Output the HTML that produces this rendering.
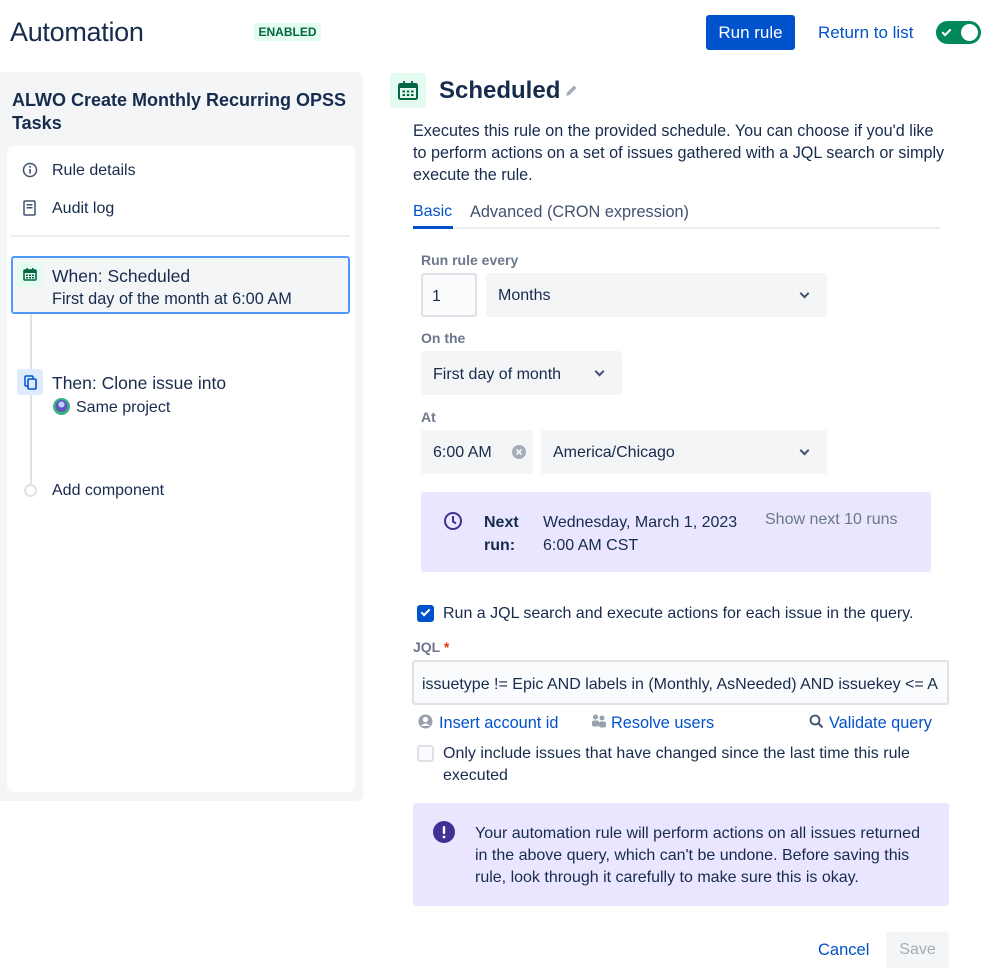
<!DOCTYPE html>
<html><head><meta charset="utf-8"><style>
*{box-sizing:border-box;margin:0;padding:0}
body{width:999px;height:977px;background:#fff;font-family:"Liberation Sans",sans-serif;color:#172b4d;font-size:16px;position:relative;overflow:hidden}
.a{position:absolute;white-space:nowrap}
.lbl{font-size:14px;font-weight:bold;color:#6b778c}
.sel{position:absolute;background:#f4f5f7;border-radius:3px}
.chev{position:absolute;width:7px;height:7px;border-right:2px solid #42526e;border-bottom:2px solid #42526e;transform:rotate(45deg)}
.blue{color:#0052cc}
</style></head><body>
<div class="a" style="left:10px;top:17px;font-size:27px;letter-spacing:-0.3px">Automation</div>
<div class="a" style="left:254px;top:23px;width:67px;height:18px;background:#e3fcef;border-radius:3px;color:#006644;font-size:12px;font-weight:bold;text-align:center;line-height:18px">ENABLED</div>
<div class="a" style="left:706px;top:15px;width:89px;height:35px;background:#0052cc;border-radius:3px;color:#fff;text-align:center;line-height:35px;font-size:17px">Run rule</div>
<div class="a blue" style="left:818px;top:23px;font-size:17px">Return to list</div>
<div class="a" style="left:936px;top:21px;width:45px;height:23px;background:#00875a;border-radius:12px"><div style="position:absolute;right:3px;top:3px;width:17px;height:17px;border-radius:50%;background:#fff"></div><div style="position:absolute;left:8px;top:6px;width:5px;height:9px;border-right:2px solid #fff;border-bottom:2px solid #fff;transform:rotate(45deg)"></div></div>

<div class="a" style="left:0;top:72px;width:363px;height:729px;background:#f4f5f7;border-radius:0 6px 6px 0"></div>
<div class="a" style="left:12px;top:89px;font-size:18px;font-weight:bold;line-height:23px;white-space:normal;width:340px">ALWO Create Monthly Recurring OPSS Tasks</div>
<div class="a" style="left:7px;top:146px;width:348px;height:646px;background:#fff;border-radius:6px"></div>
<svg class="a" style="left:22px;top:162px" width="16" height="16"><circle cx="8" cy="8" r="6.5" fill="none" stroke="#42526e" stroke-width="1.5"/><rect x="7.2" y="7" width="1.6" height="4.5" fill="#42526e"/><circle cx="8" cy="4.8" r="1" fill="#42526e"/></svg>
<div class="a" style="left:52px;top:162px">Rule details</div>
<svg class="a" style="left:23px;top:200px" width="14" height="16"><rect x="1" y="1" width="11" height="14" rx="1" fill="none" stroke="#42526e" stroke-width="1.5"/><rect x="3.5" y="4" width="6" height="1.5" fill="#42526e"/><rect x="3.5" y="7" width="6" height="1.5" fill="#42526e"/></svg>
<div class="a" style="left:52px;top:200px">Audit log</div>
<div class="a" style="left:11px;top:235px;width:339px;height:2px;background:#ebecf0"></div>
<div class="a" style="left:30px;top:287px;width:2px;height:200px;background:#dfe1e6"></div>
<div class="a" style="left:11px;top:256px;width:339px;height:58px;border:2px solid #4c9aff;background:#f4f5f7;border-radius:3px"></div>
<div class="a" style="left:17px;top:262px;width:26px;height:25px;background:#e3fcef;border-radius:3px"></div>
<svg class="a" style="left:23px;top:268px" width="14" height="13"><rect x="1" y="2" width="12" height="10" rx="1" fill="none" stroke="#006644" stroke-width="1.6"/><rect x="1" y="2" width="12" height="3" fill="#006644"/><rect x="3.5" y="0" width="1.5" height="3" fill="#006644"/><rect x="9" y="0" width="1.5" height="3" fill="#006644"/><g fill="#006644"><rect x="3" y="6.5" width="2" height="1.5"/><rect x="6" y="6.5" width="2" height="1.5"/><rect x="9" y="6.5" width="2" height="1.5"/><rect x="3" y="9" width="2" height="1.5"/><rect x="6" y="9" width="2" height="1.5"/><rect x="9" y="9" width="2" height="1.5"/></g></svg>
<div class="a" style="left:52px;top:266px;font-size:17.5px">When: Scheduled</div>
<div class="a" style="left:52px;top:290px;font-size:16.3px">First day of the month at 6:00 AM</div>
<div class="a" style="left:17px;top:369px;width:26px;height:26px;background:#deebff;border-radius:3px"></div>
<svg class="a" style="left:24px;top:375px" width="14" height="15"><rect x="1" y="1" width="8" height="10" rx="1" fill="none" stroke="#0052cc" stroke-width="1.5"/><rect x="4" y="4" width="8" height="10" rx="1" fill="#deebff" stroke="#0052cc" stroke-width="1.6"/></svg>
<div class="a" style="left:52px;top:373px;font-size:17.5px">Then: Clone issue into</div>
<svg class="a" style="left:53px;top:398px" width="17" height="17"><circle cx="8.5" cy="8.5" r="8.5" fill="#36b37e"/><circle cx="8.5" cy="8" r="6" fill="#6554c0"/><circle cx="8.5" cy="6.5" r="3" fill="#b3d4ff"/></svg>
<div class="a" style="left:76px;top:399px">Same project</div>
<div class="a" style="left:24px;top:484px;width:13px;height:13px;border:2px solid #dfe1e6;border-radius:50%;background:#fff"></div>
<div class="a" style="left:52px;top:482px">Add component</div>

<div class="a" style="left:390px;top:73px;width:36px;height:35px;background:#e3fcef;border-radius:3px"></div>
<svg class="a" style="left:398px;top:81px" width="20" height="19"><rect x="1" y="3" width="18" height="15" rx="1.5" fill="none" stroke="#006644" stroke-width="2"/><rect x="1" y="3" width="18" height="4" fill="#006644"/><rect x="5" y="0" width="2" height="4" fill="#006644"/><rect x="13" y="0" width="2" height="4" fill="#006644"/><g fill="#006644"><rect x="4.5" y="9.5" width="2.5" height="2"/><rect x="8.8" y="9.5" width="2.5" height="2"/><rect x="13" y="9.5" width="2.5" height="2"/><rect x="4.5" y="13" width="2.5" height="2"/><rect x="8.8" y="13" width="2.5" height="2"/><rect x="13" y="13" width="2.5" height="2"/></g></svg>
<div class="a" style="left:439px;top:77px;font-size:24px;font-weight:bold">Scheduled</div>
<svg class="a" style="left:563px;top:83px" width="16" height="16"><path d="M3 13 L4 9.5 L11 2.5 L13.5 5 L6.5 12 Z" fill="#a5adba"/></svg>
<div class="a" style="left:413px;top:120px;line-height:22px;font-size:16.2px">Executes this rule on the provided schedule. You can choose if you'd like<br>to perform actions on a set of issues gathered with a JQL search or simply<br>execute the rule.</div>
<div class="a blue" style="left:413px;top:203px">Basic</div>
<div class="a" style="left:470px;top:203px;color:#42526e;font-size:16.3px">Advanced (CRON expression)</div>
<div class="a" style="left:413px;top:227px;width:527px;height:2px;background:#ebecf0"></div>
<div class="a" style="left:413px;top:226px;width:40px;height:3px;background:#0052cc"></div>

<div class="a lbl" style="left:421px;top:252px">Run rule every</div>
<div class="a" style="left:421px;top:273px;width:56px;height:44px;border:2px solid #dfe1e6;background:#fafbfc;border-radius:3px;padding:13px 0 0 9px">1</div>
<div class="sel" style="left:486px;top:273px;width:341px;height:44px"></div>
<div class="a" style="left:498px;top:287px">Months</div><div class="chev" style="left:801px;top:290px"></div>
<div class="a lbl" style="left:421px;top:330px">On the</div>
<div class="sel" style="left:421px;top:351px;width:201px;height:44px"></div>
<div class="a" style="left:433px;top:366px">First day of month</div><div class="chev" style="left:596px;top:368px"></div>
<div class="a lbl" style="left:421px;top:409px">At</div>
<div class="sel" style="left:421px;top:430px;width:112px;height:44px"></div>
<div class="a" style="left:433px;top:444px">6:00 AM</div>
<svg class="a" style="left:512px;top:445px" width="14" height="14"><circle cx="7" cy="7" r="7" fill="#a5adba"/><path d="M4.5 4.5 L9.5 9.5 M9.5 4.5 L4.5 9.5" stroke="#f4f5f7" stroke-width="1.6"/></svg>
<div class="sel" style="left:541px;top:430px;width:286px;height:44px"></div>
<div class="a" style="left:553px;top:444px">America/Chicago</div><div class="chev" style="left:801px;top:447px"></div>

<div class="a" style="left:421px;top:492px;width:510px;height:80px;background:#eae6ff;border-radius:3px"></div>
<svg class="a" style="left:443px;top:511px" width="20" height="20"><circle cx="10" cy="10" r="8" fill="none" stroke="#403294" stroke-width="2"/><path d="M10 5 V10.5 L13 12.5" fill="none" stroke="#403294" stroke-width="2"/></svg>
<div class="a" style="left:484px;top:511px;font-weight:bold;line-height:23px">Next<br>run:</div>
<div class="a" style="left:543px;top:511px;line-height:23px">Wednesday, March 1, 2023<br>6:00 AM CST</div>
<div class="a" style="left:765px;top:511px;color:#6b778c">Show next 10 runs</div>

<div class="a" style="left:417px;top:605px;width:17px;height:17px;background:#0052cc;border-radius:3px"></div>
<div class="a" style="left:423px;top:607px;width:5px;height:9px;border-right:2px solid #fff;border-bottom:2px solid #fff;transform:rotate(45deg)"></div>
<div class="a" style="left:443px;top:605px">Run a JQL search and execute actions for each issue in the query.</div>
<div class="a lbl" style="left:413px;top:639px">JQL <span style="color:#de350b">*</span></div>
<div class="a" style="left:412px;top:660px;width:537px;height:45px;border:2px solid #dfe1e6;background:#fafbfc;border-radius:3px;overflow:hidden;padding:14px 0 0 8px">issuetype != Epic AND labels in (Monthly, AsNeeded) AND issuekey &lt;= A</div>
<svg class="a" style="left:418px;top:714px" width="15" height="15"><circle cx="7.5" cy="7.5" r="7" fill="#97a0af"/><circle cx="7.5" cy="5.5" r="2.7" fill="#fff"/><path d="M3 12 Q7.5 7 12 12" fill="#fff"/></svg>
<div class="a blue" style="left:439px;top:714px;font-size:16.3px">Insert account id</div>
<svg class="a" style="left:591px;top:714px" width="16" height="14"><circle cx="4.5" cy="3" r="2.5" fill="#97a0af"/><circle cx="11" cy="4" r="2.5" fill="#97a0af"/><rect x="1" y="6.5" width="7" height="6" rx="2" fill="#97a0af"/><rect x="8" y="7.5" width="7" height="6" rx="2" fill="#97a0af"/></svg>
<div class="a blue" style="left:611px;top:714px;font-size:16.3px">Resolve users</div>
<svg class="a" style="left:809px;top:714px" width="15" height="15"><circle cx="6" cy="6" r="4.5" fill="none" stroke="#42526e" stroke-width="1.8"/><path d="M9.5 9.5 L13.5 13.5" stroke="#42526e" stroke-width="2"/></svg>
<div class="a blue" style="left:829px;top:714px;font-size:16.3px">Validate query</div>
<div class="a" style="left:417px;top:745px;width:17px;height:17px;border:2px solid #dfe1e6;background:#fafbfc;border-radius:3px"></div>
<div class="a" style="left:443px;top:743px;line-height:22px">Only include issues that have changed since the last time this rule<br>executed</div>

<div class="a" style="left:413px;top:803px;width:536px;height:103px;background:#eae6ff;border-radius:3px"></div>
<svg class="a" style="left:432px;top:820px" width="24" height="24"><circle cx="12" cy="12" r="11" fill="#403294"/><rect x="10.8" y="6" width="2.4" height="8" rx="1" fill="#fff"/><circle cx="12" cy="17" r="1.4" fill="#fff"/></svg>
<div class="a" style="left:475px;top:823px;line-height:22px">Your automation rule will perform actions on all issues returned<br>in the above query, which can't be undone. Before saving this<br>rule, look through it carefully to make sure this is okay.</div>
<div class="a blue" style="left:818px;top:941px;font-size:16.5px">Cancel</div>
<div class="a" style="left:886px;top:932px;width:63px;height:36px;background:#f4f5f7;border-radius:3px;color:#a5adba;text-align:center;line-height:36px">Save</div>
</body></html>
